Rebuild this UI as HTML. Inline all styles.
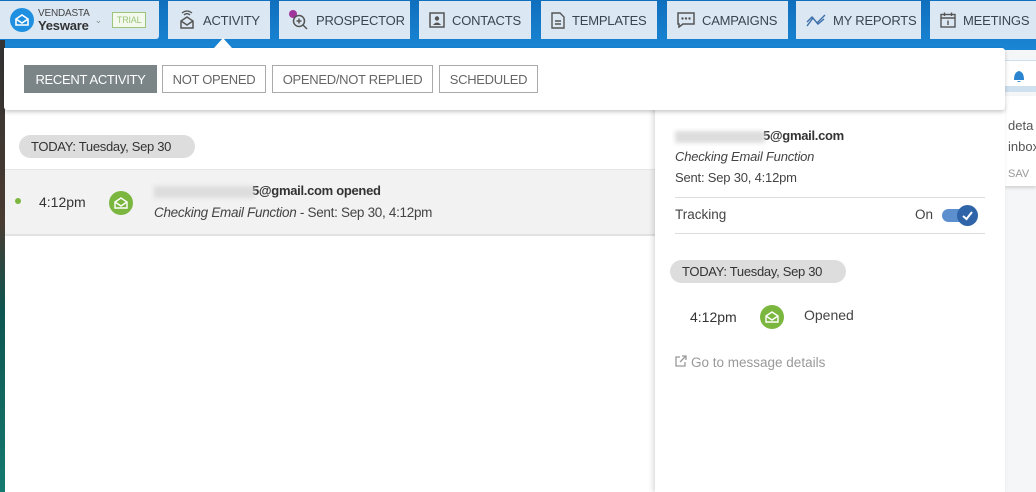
<!DOCTYPE html>
<html><head><meta charset="utf-8"><style>
*{box-sizing:border-box;margin:0;padding:0}
body{width:1036px;height:492px;overflow:hidden;position:relative;font-family:"Liberation Sans",sans-serif;color:#333;background:#f4f6f8;white-space:nowrap}
.nav{position:absolute;left:0;top:0;width:1036px;height:50px;background:linear-gradient(#0f6fbd,#1a86d4)}
.b{position:absolute;top:1px;height:38px;background:#dbe8f4;display:flex;align-items:center;font-size:13px;color:#3a4550;letter-spacing:-.2px}
.b svg{margin:0 7px 0 10px;flex:none}
.left{position:absolute;left:0;top:40px;width:5px;height:452px;background:linear-gradient(#333 0,#4a3b32 40%,#0d5550 60%,#157a70 100%)}
.main{position:absolute;left:5px;top:110px;width:650px;height:382px;background:#fff}
.right{position:absolute;left:655px;top:105px;width:350px;height:387px;background:#fff;box-shadow:-2px 0 5px rgba(0,0,0,.15)}
.filter{position:absolute;left:4px;top:48px;width:1001px;height:62px;background:#fff;box-shadow:0 2px 4px rgba(0,0,0,.22);border-radius:0 3px 3px 3px}
.f{position:absolute;top:17px;height:28px;border:1px solid #aaa;font-size:13px;letter-spacing:-.3px;color:#666;display:flex;align-items:center;justify-content:center}
.pill{position:absolute;background:#ddd;border-radius:12px;height:23px;font-size:13px;letter-spacing:-.3px;color:#333;display:flex;align-items:center;padding:0 12px}
.ic{position:absolute;width:24px;height:24px;border-radius:50%;background:#7bb63e;display:flex;align-items:center;justify-content:center}
.blur{display:inline-block;background:#ddd;filter:blur(2px);height:12px;vertical-align:middle}
</style></head><body>
<div class="nav"></div>
<div class="b" style="left:0;width:159px;border-radius:0 0 3px 0">
 <div style="margin-left:10px;width:24px;height:24px;border-radius:50%;background:#1f8fdf;display:flex;align-items:center;justify-content:center"><svg width="14" height="12" viewBox="0 0 14 12" style="margin:0"><path d="M1 5 L7 1 L13 5 V11 H1 Z M1 5 L7 9 L13 5" fill="none" stroke="#fff" stroke-width="1.6"/></svg></div>
 <div style="margin-left:4px;line-height:12px"><div style="font-size:10px;color:#444">VENDASTA</div><div style="font-size:13px;font-weight:bold;color:#333">Yesware</div></div>
 <span style="font-size:9px;color:#888;margin-left:5px">⌄</span>
 <div style="margin-left:10px;border:1px solid #9bc57a;color:#9bc57a;font-size:9px;padding:2px 4px;background:#f4f9ee">TRIAL</div>
</div>
<div class="b" style="left:168px;width:102px"><svg width="18" height="20" viewBox="0 0 18 20"><path d="M3 11 L9 7 L15 11 V18 H3 Z M3 11 L9 15 L15 11" fill="none" stroke="#555" stroke-width="1.5"/><path d="M6 5 Q9 2 12 5 M4 3 Q9 -1 14 3" fill="none" stroke="#555" stroke-width="1.3"/></svg>ACTIVITY</div>
<div style="position:absolute;left:214px;top:38px;width:0;height:0;border-left:9px solid transparent;border-right:9px solid transparent;border-bottom:10px solid #fff"></div>
<div class="b" style="left:279px;width:131px"><svg width="20" height="20" viewBox="0 0 20 20"><circle cx="4" cy="4" r="4" fill="#a0359c"/><circle cx="10" cy="11" r="5.5" fill="none" stroke="#555" stroke-width="1.5"/><path d="M14 15 L18 19 M10 8.5 V13.5 M7.5 11 H12.5" stroke="#555" stroke-width="1.5"/></svg>PROSPECTOR</div>
<div class="b" style="left:419px;width:112px"><svg width="16" height="16" viewBox="0 0 16 16"><rect x="1" y="1" width="14" height="14" fill="none" stroke="#555" stroke-width="1.5"/><circle cx="8" cy="6.5" r="2.2" fill="#555"/><path d="M4 13 Q8 8 12 13 Z" fill="#555"/></svg>CONTACTS</div>
<div class="b" style="left:541px;width:116px"><svg width="14" height="17" viewBox="0 0 14 17"><path d="M1 1 H9 L13 5 V16 H1 Z M4 9 H10 M4 12 H10" fill="none" stroke="#555" stroke-width="1.4"/></svg>TEMPLATES</div>
<div class="b" style="left:667px;width:121px"><svg width="18" height="16" viewBox="0 0 18 16"><path d="M1 1 H17 V12 H6 L2 15 V12 H1 Z" fill="none" stroke="#555" stroke-width="1.5"/><circle cx="5.5" cy="6.5" r="1.2" fill="#555"/><circle cx="9" cy="6.5" r="1.2" fill="#555"/><circle cx="12.5" cy="6.5" r="1.2" fill="#555"/></svg>CAMPAIGNS</div>
<div class="b" style="left:796px;width:125px"><svg width="20" height="14" viewBox="0 0 20 14"><path d="M1 13 L7 5 L11 10 L19 2 M1 9 L6 4 L12 11 L18 6" fill="none" stroke="#3c6ea8" stroke-width="1.4"/></svg>MY REPORTS</div>
<div class="b" style="left:930px;width:110px"><svg width="16" height="16" viewBox="0 0 16 16"><rect x="1" y="2.5" width="14" height="12.5" fill="none" stroke="#555" stroke-width="1.4"/><path d="M1 6 H15 M4.5 0.5 V4 M11.5 0.5 V4 M8 8.5 V13" stroke="#555" stroke-width="1.4"/></svg>MEETINGS</div>
<div class="left"></div>
<div style="position:absolute;left:1005px;top:60px;width:31px;height:32px;background:#fff;border-top:1px solid #cfe0ee;border-bottom:6px solid #cfe0ee"><svg width="16" height="16" viewBox="0 0 16 16" style="position:absolute;left:6px;top:7px"><path d="M3 12 Q3 4 8 3 Q13 4 13 12 Z M6 13 Q8 15 10 13" fill="#2a84d0"/></svg></div>
<div style="position:absolute;left:1005px;top:96px;width:31px;height:90px;background:#fff;font-size:13px;color:#555;box-shadow:0 2px 3px rgba(0,0,0,.15)"><div style="position:absolute;left:3px;top:22px">deta</div><div style="position:absolute;left:3px;top:43px">inbox</div><div style="position:absolute;left:3px;top:72px;font-size:11px;color:#999">SAV</div></div>
<div class="main">
 <div class="pill" style="left:14px;top:25px;width:176px">TODAY: Tuesday, Sep 30</div>
 <div style="position:absolute;left:0;top:59px;width:650px;height:67px;background:#f2f2f2;border-top:1px solid #e6e6e6;border-bottom:2px solid #e2e2e2">
  <div style="position:absolute;left:10px;top:28px;width:6px;height:6px;border-radius:50%;background:#7bb63e"></div>
  <div style="position:absolute;left:34px;top:24px;font-size:14px">4:12pm</div>
  <div class="ic" style="left:104px;top:21px"><svg width="14" height="12" viewBox="0 0 14 12"><path d="M1 5 L7 1 L13 5 V11 H1 Z M1 5 L7 9 L13 5" fill="none" stroke="#fff" stroke-width="1.4"/></svg></div>
  <div style="position:absolute;left:149px;top:13px;font-size:13px;letter-spacing:-.3px;font-weight:bold;color:#333"><span class="blur" style="width:100px;margin-right:-2px"></span>5@gmail.com opened</div>
  <div style="position:absolute;left:149px;top:35px;font-size:13.5px;letter-spacing:-.3px;color:#444"><i>Checking Email Function</i> - Sent: Sep 30, 4:12pm</div>
 </div>
</div>
<div class="right">
 <div style="position:absolute;left:20px;top:23px;font-size:13px;letter-spacing:-.3px;font-weight:bold"><span class="blur" style="width:90px;margin-right:-2px"></span>5@gmail.com</div>
 <div style="position:absolute;left:20px;top:44px;font-size:13px;letter-spacing:-.2px;font-style:italic;color:#444">Checking Email Function</div>
 <div style="position:absolute;left:20px;top:65px;font-size:13px;letter-spacing:-.2px;color:#444">Sent: Sep 30, 4:12pm</div>
 <div style="position:absolute;left:20px;top:92px;width:310px;border-top:1px solid #ddd"></div>
 <div style="position:absolute;left:20px;top:102px;font-size:13.5px;color:#444">Tracking</div>
 <div style="position:absolute;left:260px;top:102px;font-size:13.5px;color:#444">On</div>
 <div style="position:absolute;left:287px;top:104px;width:32px;height:13px;border-radius:7px;background:#5b8fce"></div>
 <div style="position:absolute;left:302px;top:100px;width:21px;height:21px;border-radius:50%;background:#2f65a8"><svg width="21" height="21" viewBox="0 0 21 21"><path d="M6 11 L9.5 14 L15 7" fill="none" stroke="#fff" stroke-width="2"/></svg></div>
 <div style="position:absolute;left:20px;top:128px;width:310px;border-top:1px solid #ddd"></div>
 <div class="pill" style="left:15px;top:155px;width:176px">TODAY: Tuesday, Sep 30</div>
 <div style="position:absolute;left:35px;top:204px;font-size:14px">4:12pm</div>
 <div class="ic" style="left:105px;top:200px"><svg width="14" height="12" viewBox="0 0 14 12"><path d="M1 5 L7 1 L13 5 V11 H1 Z M1 5 L7 9 L13 5" fill="none" stroke="#fff" stroke-width="1.4"/></svg></div>
 <div style="position:absolute;left:149px;top:202px;font-size:14px;color:#444">Opened</div>
 <div style="position:absolute;left:20px;top:250px;font-size:13.5px;color:#999"><svg width="12" height="12" viewBox="0 0 12 12" style="margin-right:4px"><path d="M5 2 H1 V11 H10 V7 M7 1 H11 V5 M11 1 L5 7" fill="none" stroke="#999" stroke-width="1.3"/></svg>Go to message details</div>
</div>
<div class="filter">
 <div class="f" style="left:20px;width:133px;background:#7b8587;border-color:#7b8587;color:#fff">RECENT ACTIVITY</div>
 <div class="f" style="left:158px;width:104px">NOT OPENED</div>
 <div class="f" style="left:268px;width:161px">OPENED/NOT REPLIED</div>
 <div class="f" style="left:435px;width:99px">SCHEDULED</div>
</div>
</body></html>
